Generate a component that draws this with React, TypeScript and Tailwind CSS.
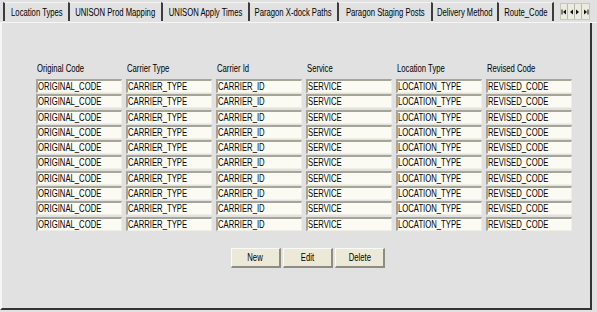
import React from "react";

const T = ({ children, className = "" }: { children: React.ReactNode; className?: string }) => (
  <span className={"inline-block whitespace-nowrap scale-x-[0.7] " + className}>{children}</span>
);

const tabs = [
  { label: "Location Types", w: "w-[65px]" },
  { label: "UNISON Prod Mapping", w: "w-[93px]" },
  { label: "UNISON Apply Times", w: "w-[87px]" },
  { label: "Paragon X-dock Paths", w: "w-[89px]" },
  { label: "Paragon Staging Posts", w: "w-[94px]" },
  { label: "Delivery Method", w: "w-[66px]", active: true },
  { label: "Route_Code", w: "w-[57px]", last: true },
];

const cols = [
  { label: "Original Code", value: "ORIGINAL_CODE" },
  { label: "Carrier Type", value: "CARRIER_TYPE" },
  { label: "Carrier Id", value: "CARRIER_ID" },
  { label: "Service", value: "SERVICE" },
  { label: "Location Type", value: "LOCATION_TYPE" },
  { label: "Revised Code", value: "REVISED_CODE" },
];

const rows = Array.from({ length: 10 });

function Arrow({ dir, bar }: { dir: "l" | "r"; bar?: boolean }) {
  return (
    <div className="w-[7px] h-full flex items-center justify-center border-r border-[#b8b8a8] last:border-r-0">
      <svg width="6" height="6" viewBox="0 0 6 6">
        {dir === "l" ? (
          <>
            {bar && <rect x="0.5" y="0.5" width="1" height="5" fill="#111" />}
            <polygon points="5,0.5 2,3 5,5.5" fill="#111" />
          </>
        ) : (
          <>
            <polygon points="1,0.5 4,3 1,5.5" fill="#111" />
            {bar && <rect x="4.5" y="0.5" width="1" height="5" fill="#111" />}
          </>
        )}
      </svg>
    </div>
  );
}

export default function App() {
  return (
    <div
      className="w-[597px] h-[312px] bg-[#e1e1e1] overflow-hidden text-[11px] text-black flex flex-col"
      style={{ fontFamily: "'Liberation Sans', Arial, sans-serif" }}
    >
      {/* tab strip */}
      <div className="h-[23px] flex items-end pl-[3px] border-b border-[#f6f6f6]">
        {tabs.map((t) => (
          <div
            key={t.label}
            className={
              "h-[19px] mb-[1px] flex items-center justify-center border-l-2 border-[#3c3c3c] border-t border-t-[#f2f2f2] bg-[#e1e1e1] " +
              t.w +
              (t.last ? " border-r-2 border-r-[#3c3c3c]" : "")
            }
          >
            <T className="origin-center leading-[12px]">{t.label}</T>
          </div>
        ))}
        <div className="ml-[6px] mb-[2px] h-[17px] w-[30px] flex bg-[#ecebdf] border border-[#c8c8b8]">
          <Arrow dir="l" bar />
          <Arrow dir="l" />
          <Arrow dir="r" />
          <Arrow dir="r" bar />
        </div>
      </div>

      {/* panel */}
      <div className="w-[592px] h-[287px] border-l-2 border-l-[#f6f6f6] border-r-2 border-r-[#333333] border-b-2 border-b-[#333333] pt-[39px] pl-[34px]">
        <div className="grid grid-cols-[repeat(6,86px)] gap-x-[4px]">
          {cols.map((c) => (
            <div key={c.label} className="h-[12px] leading-[12px] pl-[1px] mb-[5px]">
              <T className="origin-left">{c.label}</T>
            </div>
          ))}
        </div>
        <div className="grid grid-cols-[repeat(6,86px)] gap-x-[4px] gap-y-[1.3px]">
          {rows.map((_, r) =>
            cols.map((c) => (
              <div
                key={r + c.label}
                className="h-[14px] bg-[#fbfbf4] border-t-2 border-l-2 border-t-[#a6a698] border-l-[#a6a698] border-b border-r border-b-[#efefe6] border-r-[#efefe6] overflow-hidden flex items-center"
              >
                <T className="origin-left leading-[11px]">{c.value}</T>
              </div>
            ))
          )}
        </div>
        <div className="flex gap-[2px] ml-[195px] mt-[17px]">
          {["New", "Edit", "Delete"].map((b) => (
            <div
              key={b}
              className="w-[50px] h-[20px] bg-[#ece9d8] border-t border-l border-t-[#fbfbf6] border-l-[#fbfbf6] border-b-2 border-r-2 border-b-[#8e8c80] border-r-[#8e8c80] flex items-center justify-center"
            >
              <T className="origin-center leading-[12px]">{b}</T>
            </div>
          ))}
        </div>
      </div>
    </div>
  );
}
